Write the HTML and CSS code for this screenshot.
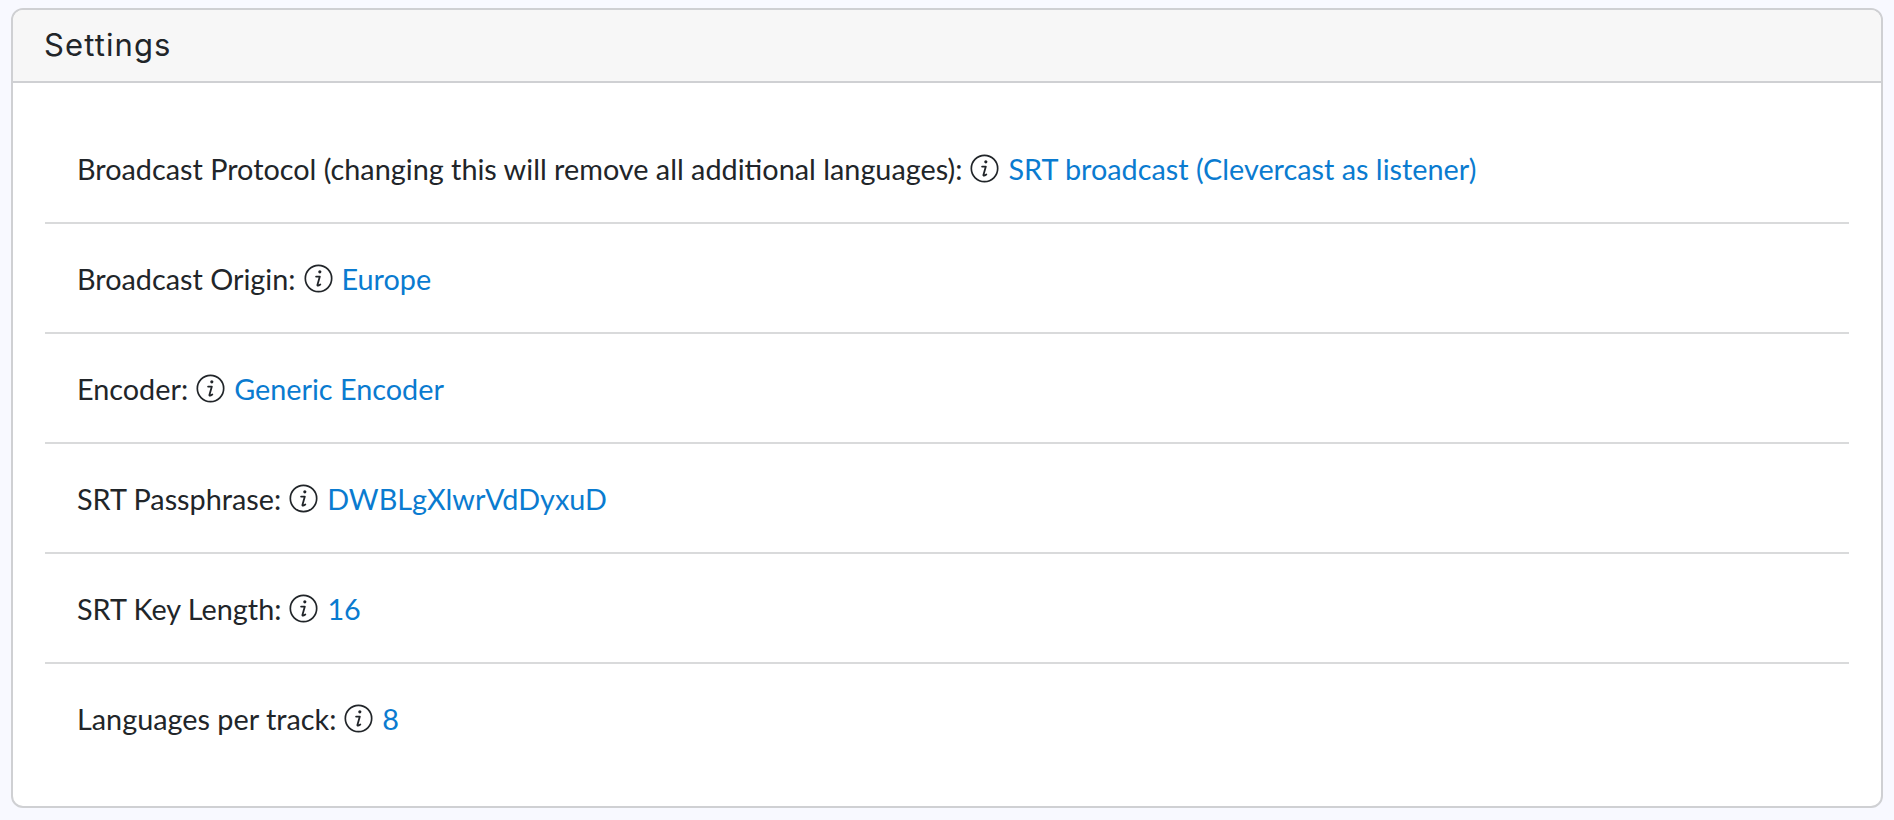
FILE: index.html
```html
<!DOCTYPE html>
<html lang="en">
<head>
<meta charset="utf-8">
<title>Settings</title>
<link rel="stylesheet" href="styles.css">
</head>
<body>
<svg class="defs" width="0" height="0" aria-hidden="true">
  <symbol id="info" viewBox="0 0 24 24">
    <circle cx="12" cy="12" r="10.9" fill="none" stroke="currentColor" stroke-width="1.4"/>
    <circle cx="13.1" cy="6.5" r="1.3" fill="currentColor"/>
    <path d="M10 10.4h3.1l-2 6.9c-.1.7.5.9 2.4-.4" fill="none" stroke="currentColor" stroke-width="1.5" stroke-linecap="round" stroke-linejoin="round"/>
  </symbol>
</svg>
<section class="card">
  <header class="card-header"><h2 class="card-title">Settings</h2></header>
  <div class="card-body">
    <div class="row"><span>Broadcast Protocol (changing this will remove all additional languages):</span><svg class="info"><use href="#info"/></svg><a class="value" href="#">SRT broadcast (Clevercast as listener)</a></div>
    <div class="row"><span>Broadcast Origin:</span><svg class="info"><use href="#info"/></svg><a class="value" href="#">Europe</a></div>
    <div class="row"><span>Encoder:</span><svg class="info"><use href="#info"/></svg><a class="value" href="#">Generic Encoder</a></div>
    <div class="row"><span>SRT Passphrase:</span><svg class="info"><use href="#info"/></svg><a class="value" href="#">DWBLgXlwrVdDyxuD</a></div>
    <div class="row"><span>SRT Key Length:</span><svg class="info"><use href="#info"/></svg><a class="value" href="#">16</a></div>
    <div class="row"><span>Languages per track:</span><svg class="info"><use href="#info"/></svg><a class="value" href="#">8</a></div>
  </div>
</section>
</body>
</html>
```
FILE: styles.css
```css
* { box-sizing: border-box; }
html, body { height: 100%; }
body {
  margin: 0;
  padding: 8px 11px 12px 11px;
  background: #f8f9ff;
  font-family: Lato, "Liberation Sans", sans-serif;
  color: #212529;
  overflow: hidden;
}
.defs { position: absolute; }
.card {
  height: 800px;
  background: #fff;
  border: 2px solid #cfd0d3;
  border-radius: 12px;
  overflow: hidden;
}
.card-header {
  height: 73px;
  background: #f7f7f7;
  border-bottom: 2px solid #cfd0d3;
  padding: 0 0 2px 31px;
  display: flex;
  align-items: center;
}
.card-title {
  margin: 0;
  font-family: Inter, "Open Sans", sans-serif;
  font-size: 31px;
  font-weight: 400;
  letter-spacing: 1.1px;
  color: #212529;
}
.card-body { padding: 31px 32px 0; }
.row {
  height: 110px;
  padding: 1px 32px 0;
  display: flex;
  align-items: center;
  font-size: 28.8px;
  border-bottom: 2px solid #d9dadb;
}
.row:last-child { border-bottom-color: transparent; }
.info { width: 29px; height: 29px; margin: 0 9px 0 8px; color: #212529; flex: none; }
.value { color: #0a7bd0; text-decoration: none; }
```
